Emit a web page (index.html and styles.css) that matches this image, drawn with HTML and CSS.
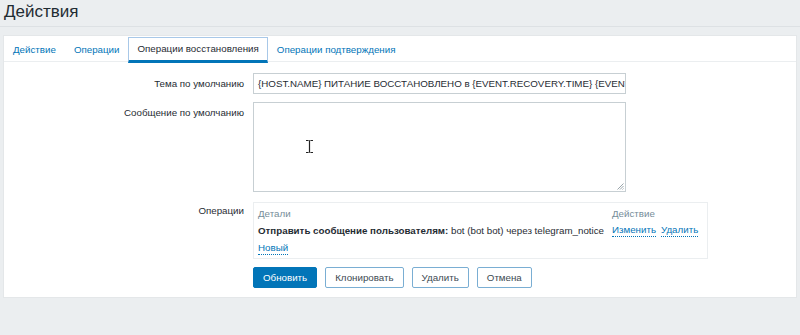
FILE: index.html
```html
<!DOCTYPE html>
<html lang="ru">
<head>
<meta charset="utf-8">
<link rel="stylesheet" href="styles.css">
</head>
<body>
<header class="header"><h1>Действия</h1></header>
<main class="panel">
  <ul class="tabs">
    <li class="tab"><a>Действие</a></li>
    <li class="tab"><a>Операции</a></li>
    <li class="tab active"><a>Операции восстановления</a></li>
    <li class="tab"><a>Операции подтверждения</a></li>
  </ul>
  <form class="form">
    <label class="lbl">Тема по умолчанию</label>
    <div class="field"><div class="input">{HOST.NAME} ПИТАНИЕ ВОССТАНОВЛЕНО в {EVENT.RECOVERY.TIME} {EVENT.RECOVERY.DATE}</div></div>
    <label class="lbl">Сообщение по умолчанию</label>
    <div class="field"><div class="textarea">
      <svg class="grip" width="7" height="7" viewBox="0 0 7 7"><path d="M6.5 0.5 L0.5 6.5 M6.5 3 L3 6.5 M6.5 5.5 L5.5 6.5" stroke="#9aa5ab" stroke-width="1"/></svg>
      <svg class="cursor" width="9" height="15" viewBox="0 0 9 15"><path d="M1 1.5h2.5M5.5 1.5H8M4.5 2v11M1 13.5h2.5M5.5 13.5H8" stroke="#222" stroke-width="1.2" fill="none"/><path d="M3.5 1.5h2M3.5 13.5h2" stroke="#555" stroke-width="1"/></svg>
    </div></div>
    <label class="lbl">Операции</label>
    <div class="field">
      <div class="ops">
        <div class="ops-grid">
          <div class="th">Детали</div>
          <div class="th">Действие</div>
          <div class="td"><b>Отправить сообщение пользователям:</b> bot (bot bot) через telegram_notice</div>
          <div class="td acts"><a class="link">Изменить</a><a class="link">Удалить</a></div>
        </div>
        <a class="link new">Новый</a>
      </div>
    </div>
    <div></div>
    <div class="buttons">
      <button type="button" class="btn primary">Обновить</button>
      <button type="button" class="btn alt">Клонировать</button>
      <button type="button" class="btn alt">Удалить</button>
      <button type="button" class="btn alt">Отмена</button>
    </div>
  </form>
</main>
</body>
</html>
```
FILE: styles.css
```css
html, body { margin: 0; padding: 0; }
body {
  background: #ebeef0;
  font-family: "Liberation Sans", Arial, sans-serif;
  font-size: 9.75px;
  color: #1f2c33;
  height: 335px;
  overflow: hidden;
}
.header {
  margin: 0 0 8px 0;
  padding: 0 4px;
  height: 26px;
  border-bottom: 1px solid #dde1e4;
}
.header h1 {
  margin: 0;
  font-size: 17px;
  font-weight: normal;
  line-height: 24px;
  color: #1f2c33;
}
.panel {
  margin-left: 3px;
  margin-right: 3px;
  background: #fff;
  border: 1px solid #e4e7e9;
  padding-bottom: 9px;
}
.tabs {
  list-style: none;
  margin: 0;
  padding: 0;
  display: flex;
  height: 25px;
  border-bottom: 1px solid #ebeef0;
}
.tab {
  padding: 0 8px;
  line-height: 24px;
  margin-top: 1px;
  color: #0275b8;
  border: 1px solid transparent;
  border-bottom: none;
}
.tab a { display: block; }
.tab.active {
  color: #1f2c33;
  border-color: #a8c8e8;
  height: 22px;
  line-height: 22px;
  border-bottom: 3px solid #0275b8;
}
.form {
  display: grid;
  grid-template-columns: 240px 1fr;
  column-gap: 9px;
  row-gap: 8px;
  padding-top: 11px;
}
.lbl {
  text-align: right;
  padding-top: 4px;
  line-height: 13px;
}
.input {
  box-sizing: border-box;
  width: 373px;
  height: 21px;
  border: 1px solid #c7cfd3;
  padding: 0 4px;
  line-height: 19px;
  white-space: nowrap;
  overflow: hidden;
}
.textarea {
  position: relative;
  box-sizing: border-box;
  width: 373px;
  height: 90px;
  border: 1px solid #c7cfd3;
}
.grip { position: absolute; right: 1px; bottom: 1px; }
.cursor { position: absolute; left: 51px; top: 36px; }
.ops {
  box-sizing: border-box;
  width: 455px;
  border: 1px solid #ebeef0;
  padding: 4px 5px 3px 4px;
  margin-top: 2px;
}
.ops-grid {
  display: grid;
  grid-template-columns: 354px 1fr;
  row-gap: 3px;
  line-height: 14px;
  align-items: start;
}
.th { color: #768d99; }
.acts { display: flex; gap: 5px; align-items: flex-start; }
.link {
  color: #0275b8;
  border-bottom: 1px dotted #0275b8;
  line-height: 12px;
  display: inline-block;
}
.new { margin-top: 4px; }
.buttons { display: flex; gap: 8px; }
.btn {
  font-family: inherit;
  font-size: 9.75px;
  height: 21px;
  padding: 0 9px;
  border-radius: 2px;
  cursor: pointer;
}
.primary {
  background: #0275b8;
  border: 1px solid #0275b8;
  color: #fff;
}
.alt {
  background: #fff;
  border: 1px solid #7aaed3;
  color: #3d4a52;
}
```
